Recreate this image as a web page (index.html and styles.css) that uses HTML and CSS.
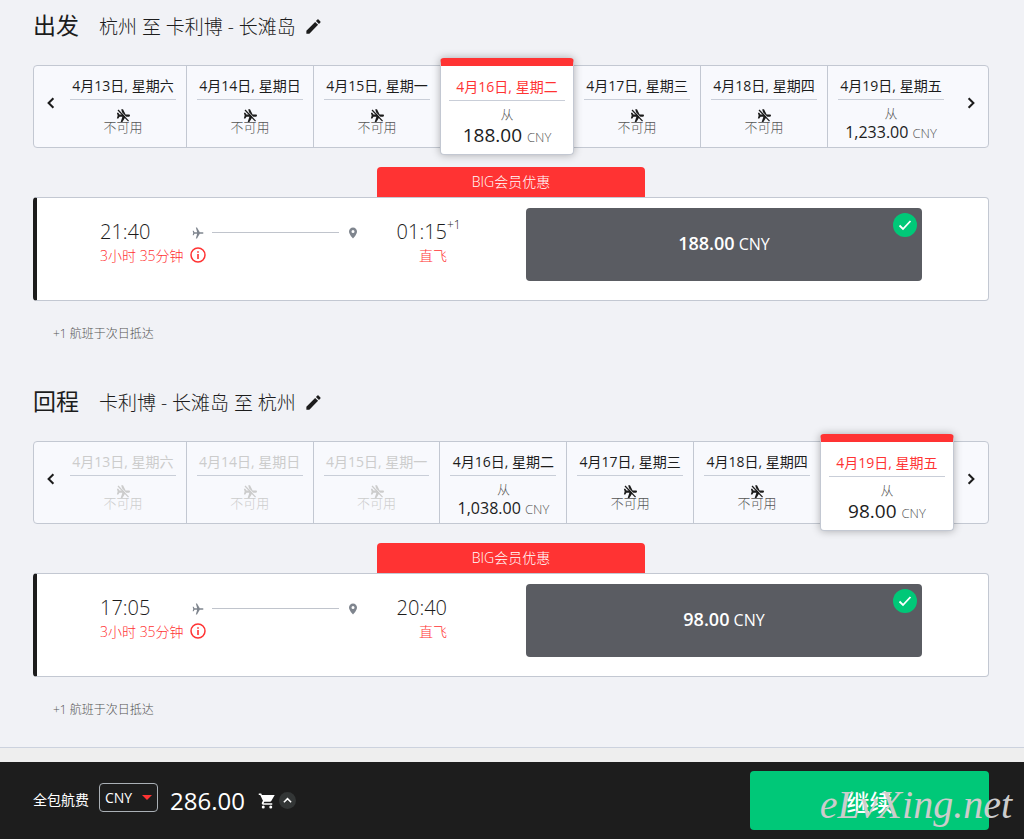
FILE: index.html
```
<!DOCTYPE html>
<html lang="zh-CN">
<head>
    <meta charset="UTF-8">
    <meta name="viewport" content="width=device-width, initial-scale=1">
    <title>选择航班</title>
    <link rel="stylesheet" href="styles.css">
</head>
<body>
    <!-- shared icons -->
    <svg class="sprite" aria-hidden="true">
        <symbol id="pencil" viewBox="0 0 24 24"><path d="M3 17.25V21h3.75L17.8 9.94l-3.75-3.75L3 17.25zM20.7 7.04a1 1 0 0 0 0-1.41l-2.34-2.34a1 1 0 0 0-1.41 0l-1.83 1.83 3.75 3.75 1.83-1.83z"/></symbol>
        <symbol id="plane" viewBox="0 0 24 24"><path d="M23 12c0-1-.8-1.700-1.700-1.700H15.500L10 1H7.700l2.600 9.300H5L3.300 7.500H1.300L2.500 12l-1.200 4.500h2L5 13.700h5.300L7.700 23H10l5.500-9.300h5.800c.9 0 1.700-.7 1.700-1.700z"/></symbol>
        <symbol id="no-plane" viewBox="0 0 24 24"><path d="M24 13c0-1.200-.8-1.900-1.700-1.900H16.500L12 2H9l2 9H6L4 8H1.500l1.300 5-1.300 5H4l2-3h5L8 24h3l5.500-9h5.800c.9 0 1.700-.8 1.700-2z"/><path d="M5 2.500L23 21.500" fill="none" stroke="#f8f9fd" stroke-width="1.500"/><path d="M3.500 3.500L21.500 22.500" fill="none" stroke="currentColor" stroke-width="2.200"/></symbol>
        <symbol id="pin" viewBox="0 0 24 24"><path d="M12 1C7.600 1 4 4.600 4 9c0 6 8 14 8 14s8-8 8-14c0-4.400-3.600-8-8-8zm0 11a3 3 0 1 1 0-6 3 3 0 0 1 0 6z"/></symbol>
        <symbol id="info" viewBox="0 0 16 16"><circle cx="8" cy="8" r="7" fill="none" stroke="currentColor" stroke-width="1.500"/><path d="M7.200 7h1.600v5H7.200zM7.200 4.200h1.600v1.600H7.200z"/></symbol>
        <symbol id="chevron" viewBox="0 0 10 10"><path d="M3 1l4 4-4 4" fill="none" stroke="currentColor" stroke-width="1.700"/></symbol>
        <symbol id="check" viewBox="0 0 24 24"><circle cx="12" cy="12" r="12" fill="#00c878"/><path d="M6.500 12.500l3.500 3.500 7.500-8" fill="none" stroke="#fff" stroke-width="1.800"/></symbol>
        <symbol id="cart" viewBox="0 0 24 24"><path d="M7 18a2 2 0 1 0 0 4 2 2 0 0 0 0-4zM1 2v2h2l3.600 7.600-1.350 2.450C4.500 15.400 5.500 17 7 17h12v-2H7.400l1.100-2h7.450c.75 0 1.400-.4 1.750-1l4.600-8H5.200L4.300 2H1zm16 16a2 2 0 1 0 0 4 2 2 0 0 0 0-4z"/></symbol>
    </svg>

    <main class="content">
        <section class="trip">
            <header class="trip-head">
                <h2>出发</h2>
                <p class="route">杭州 至 卡利博 - 长滩岛</p>
                <button class="edit" aria-label="修改"><svg><use href="#pencil"/></svg></button>
            </header>

            <div class="dates">
                <button class="arrow prev" aria-label="前一天"><svg><use href="#chevron"/></svg></button>
                <button class="day"><span class="date">4月13日, 星期六</span><svg class="none"><use href="#no-plane"/></svg><span class="na">不可用</span></button>
                <button class="day"><span class="date">4月14日, 星期日</span><svg class="none"><use href="#no-plane"/></svg><span class="na">不可用</span></button>
                <button class="day"><span class="date">4月15日, 星期一</span><svg class="none"><use href="#no-plane"/></svg><span class="na">不可用</span></button>
                <button class="day selected"><span class="date">4月16日, 星期二</span><span class="from">从</span><span class="price">188.00 <small>CNY</small></span></button>
                <button class="day"><span class="date">4月17日, 星期三</span><svg class="none"><use href="#no-plane"/></svg><span class="na">不可用</span></button>
                <button class="day"><span class="date">4月18日, 星期四</span><svg class="none"><use href="#no-plane"/></svg><span class="na">不可用</span></button>
                <button class="day"><span class="date">4月19日, 星期五</span><span class="from">从</span><span class="price">1,233.00 <small>CNY</small></span></button>
                <button class="arrow next" aria-label="后一天"><svg><use href="#chevron"/></svg></button>
            </div>

            <div class="banner">BIG会员优惠</div>
            <article class="flight">
                <div class="info">
                    <div class="times">
                        <span class="depart">21:40</span>
                        <svg class="ico"><use href="#plane"/></svg>
                        <span class="line"></span>
                        <svg class="ico"><use href="#pin"/></svg>
                        <span class="arrive">01:15<sup>+1</sup></span>
                    </div>
                    <div class="details">
                        <span>3小时 35分钟</span>
                        <button class="more" aria-label="航班详情"><svg><use href="#info"/></svg></button>
                        <span class="direct">直飞</span>
                    </div>
                </div>
                <button class="fare">
                    <span><b>188.00</b> CNY</span>
                    <svg class="check"><use href="#check"/></svg>
                </button>
            </article>
            <p class="note">+1 航班于次日抵达</p>
        </section>

        <section class="trip">
            <header class="trip-head">
                <h2>回程</h2>
                <p class="route">卡利博 - 长滩岛 至 杭州</p>
                <button class="edit" aria-label="修改"><svg><use href="#pencil"/></svg></button>
            </header>

            <div class="dates">
                <button class="arrow prev" aria-label="前一天"><svg><use href="#chevron"/></svg></button>
                <button class="day" disabled><span class="date">4月13日, 星期六</span><svg class="none"><use href="#no-plane"/></svg><span class="na">不可用</span></button>
                <button class="day" disabled><span class="date">4月14日, 星期日</span><svg class="none"><use href="#no-plane"/></svg><span class="na">不可用</span></button>
                <button class="day" disabled><span class="date">4月15日, 星期一</span><svg class="none"><use href="#no-plane"/></svg><span class="na">不可用</span></button>
                <button class="day"><span class="date">4月16日, 星期二</span><span class="from">从</span><span class="price">1,038.00 <small>CNY</small></span></button>
                <button class="day"><span class="date">4月17日, 星期三</span><svg class="none"><use href="#no-plane"/></svg><span class="na">不可用</span></button>
                <button class="day"><span class="date">4月18日, 星期四</span><svg class="none"><use href="#no-plane"/></svg><span class="na">不可用</span></button>
                <button class="day selected"><span class="date">4月19日, 星期五</span><span class="from">从</span><span class="price">98.00 <small>CNY</small></span></button>
                <button class="arrow next" aria-label="后一天"><svg><use href="#chevron"/></svg></button>
            </div>

            <div class="banner">BIG会员优惠</div>
            <article class="flight">
                <div class="info">
                    <div class="times">
                        <span class="depart">17:05</span>
                        <svg class="ico"><use href="#plane"/></svg>
                        <span class="line"></span>
                        <svg class="ico"><use href="#pin"/></svg>
                        <span class="arrive">20:40</span>
                    </div>
                    <div class="details">
                        <span>3小时 35分钟</span>
                        <button class="more" aria-label="航班详情"><svg><use href="#info"/></svg></button>
                        <span class="direct">直飞</span>
                    </div>
                </div>
                <button class="fare">
                    <span><b>98.00</b> CNY</span>
                    <svg class="check"><use href="#check"/></svg>
                </button>
            </article>
            <p class="note">+1 航班于次日抵达</p>
        </section>
    </main>

    <footer class="total-bar">
        <label for="currency">全包航费</label>
        <div class="currency">
            <select id="currency">
                <option>CNY</option>
            </select>
        </div>
        <span class="total">286.00</span>
        <svg class="cart"><use href="#cart"/></svg>
        <button class="expand" aria-label="展开明细"><svg><use href="#chevron"/></svg></button>
        <button class="continue">继续</button>
        <span class="watermark">eLvXing.net</span>
    </footer>
</body>
</html>
```
FILE: styles.css
```
* {
    box-sizing: border-box;
}
body {
    margin: 0;
    min-height: 100vh;
    display: flex;
    flex-direction: column;
    background: #eee;
    color: #1c1c1c;
    font-family: "Open Sans", "Noto Sans CJK SC", sans-serif;
    font-size: 14px;
}
h2, p {
    margin: 0;
    font-weight: 300;
}
button {
    padding: 0;
    border: 0;
    background: none;
    color: inherit;
    font: inherit;
    cursor: pointer;
}
svg {
    display: block;
    fill: currentColor;
}
.sprite {
    position: absolute;
    width: 0;
    height: 0;
}
.content {
    flex: 1;
    margin-bottom: 14px;
    padding: 0 35px 0 33px;
    background: #f1f2f6;
    border-bottom: 1px solid #ccd2de;
}

/* section title */
.trip {
    padding-bottom: 32px;
}
.trip:last-child {
    padding-bottom: 27px;
}
.trip-head {
    display: flex;
    align-items: center;
    height: 65px;
    padding-bottom: 13px;
}
.trip-head h2 {
    margin-right: 20px;
    font-size: 23px;
    font-weight: 400;
    line-height: 28px;
    padding-bottom: 3px;
}
.route {
    font-size: 19px;
}
.edit {
    margin-left: 8px;
}
.edit svg {
    width: 19px;
    height: 19px;
}

/* date strip */
.dates {
    display: flex;
    height: 83px;
    border: 1px solid #c3c8d2;
    border-radius: 4px;
    background: #f8f9fd;
}
.arrow {
    flex: none;
    display: flex;
    align-items: center;
    justify-content: center;
    padding-bottom: 8px;
}
.arrow svg {
    width: 12px;
    height: 12px;
}
.prev {
    width: 26px;
    padding-left: 8px;
}
.prev svg {
    transform: rotate(180deg);
}
.next {
    width: 34px;
}
.day {
    flex: 1;
    display: flex;
    flex-direction: column;
    align-items: center;
    justify-content: flex-start;
    padding: 9px 10px 0;
    white-space: nowrap;
}
.day + .day {
    border-left: 1px solid #c3c8d2;
}
.date {
    width: 100%;
    padding-bottom: 3px;
    border-bottom: 1px solid #c9ced8;
    line-height: 21px;
}
.none {
    width: 14px;
    height: 14px;
    margin-top: 8px;
}
.na, .from, .price small {
    color: #555;
    font-size: 13px;
    font-weight: 300;
}
.na, .from {
    line-height: 14px;
}
.na {
    margin-top: -2px;
}
.from {
    margin-top: 6px;
}
.price {
    font-size: 16px;
    line-height: 24px;
}
.day:disabled,
.day:disabled .na {
    color: #ccc;
}
.day.selected {
    flex: 0 0 134px;
    margin: -8px 0;
    padding: 10px 8px 0;
    background: #fff;
    border: 1px solid #c3c8d2;
    border-top: 8px solid #f33;
    border-radius: 4px;
    box-shadow: 0 0 8px rgba(0, 0, 0, 0.3);
    z-index: 1;
}
.selected .date {
    color: #f33;
}
.selected .price {
    font-size: 19px;
    line-height: 28px;
}
.selected + .day {
    border-left: 0;
}

/* flight card */
.banner {
    width: 28%;
    height: 30px;
    margin: 19px auto 0;
    background: #f33;
    border-radius: 4px 4px 0 0;
    color: #fff;
    font-weight: 300;
    line-height: 30px;
    text-align: center;
}
.flight {
    display: grid;
    grid-template-columns: 347fr 396fr;
    gap: 79px;
    padding: 10px 66px 19px 63px;
    background: #fff;
    border: 1px solid #c3c8d2;
    border-left: 4px solid #1c1c1c;
    border-radius: 4px;
}
.info {
    padding-top: 8px;
    font-weight: 300;
}
.times {
    display: flex;
    align-items: center;
    height: 30px;
    font-size: 20px;
}
.depart {
    width: 92px;
}
.ico {
    width: 12px;
    height: 12px;
    margin-top: 3px;
    color: #7f858e;
}
.line {
    flex: 1;
    height: 1px;
    margin: 3px 8px 0;
    background: #c0c4cc;
}
.arrive {
    position: relative;
    width: 88px;
    text-align: right;
}
.arrive sup {
    position: absolute;
    left: 100%;
    top: 0;
    font-size: 12px;
    line-height: 14px;
}
.details {
    display: flex;
    align-items: center;
    height: 18px;
    color: #f33;
}
.more {
    margin-left: 6px;
}
.more svg {
    width: 16px;
    height: 16px;
}
.direct {
    margin-left: auto;
}
.fare {
    position: relative;
    height: 73px;
    padding-bottom: 4px;
    background: #5a5c62;
    border-radius: 4px;
    color: #fff;
    font-size: 16px;
}
.fare b {
    font-size: 18px;
    font-weight: 600;
}
.check {
    position: absolute;
    top: 5px;
    right: 5px;
    width: 24px;
    height: 24px;
}
.note {
    padding: 23px 20px 0;
    color: #555;
    font-size: 12px;
    line-height: 20px;
}

/* bottom bar */
.total-bar {
    position: relative;
    display: flex;
    align-items: center;
    height: 77px;
    padding: 0 35px 0 33px;
    background: #1d1d1d;
    color: #fff;
}
.total-bar label {
    padding-bottom: 4px;
}
.currency {
    position: relative;
    margin: 0 12px 6px 10px;
}
.currency select {
    display: block;
    width: 59px;
    height: 29px;
    padding: 0 5px;
    appearance: none;
    background: transparent;
    border: 1px solid #aab0b6;
    border-radius: 4px;
    color: #fff;
    font: inherit;
}
.currency::after {
    content: "";
    position: absolute;
    top: 12px;
    right: 6px;
    border: 5px solid transparent;
    border-top-color: #f33;
    border-bottom: 0;
    pointer-events: none;
}
.total {
    font-size: 24px;
}
.cart {
    width: 18px;
    height: 18px;
    margin-left: 13px;
}
.expand {
    display: flex;
    align-items: center;
    justify-content: center;
    width: 17px;
    height: 17px;
    margin-left: 3px;
    background: #333636;
    border-radius: 50%;
}
.expand svg {
    width: 9px;
    height: 9px;
    transform: rotate(-90deg);
}
.continue {
    width: 239px;
    height: 59px;
    margin-left: auto;
    background: #00c878;
    border-radius: 4px;
    font-size: 23px;
    font-weight: 500;
}
.watermark {
    position: absolute;
    right: 12px;
    bottom: 14px;
    color: #ccc;
    font-family: "Liberation Serif", serif;
    font-size: 40px;
    font-style: italic;
    line-height: 40px;
    pointer-events: none;
}
```
